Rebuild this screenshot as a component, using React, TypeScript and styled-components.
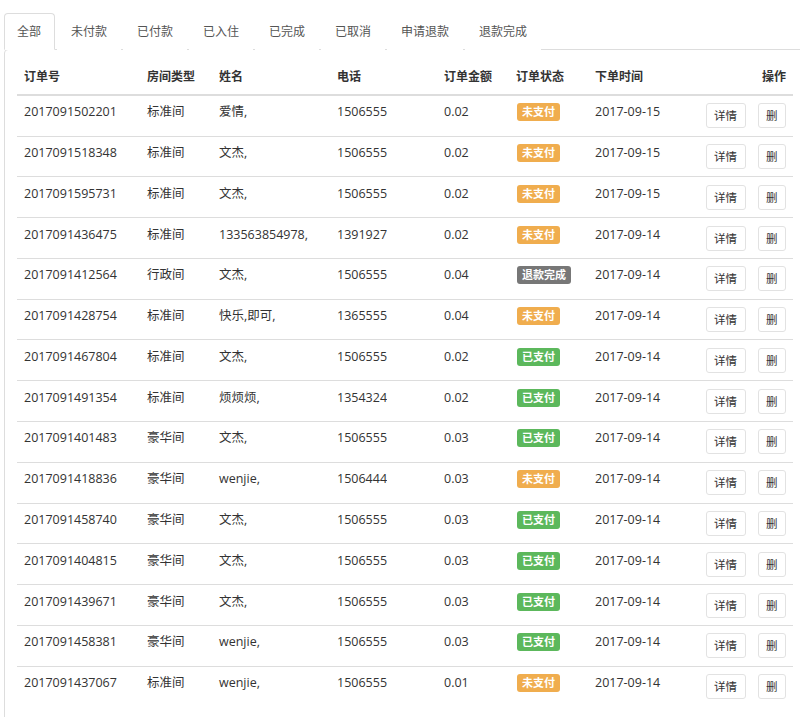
import React, { useState } from 'react';
import styled, { createGlobalStyle } from 'styled-components';

const GlobalStyle = createGlobalStyle`
  html, body {
    margin: 0;
    padding: 0;
    overflow: hidden;
    background: #fff;
  }
  body {
    font-family: "Open Sans", "Noto Sans CJK SC", sans-serif;
    font-size: 12.5px;
    color: #333;
  }
`;

type Status = 'unpaid' | 'paid' | 'refunded';

interface Order {
  no: string;
  room: string;
  name: string;
  phone: string;
  amount: string;
  status: Status;
  date: string;
}

const statusText: Record<Status, string> = {
  unpaid: '未支付',
  paid: '已支付',
  refunded: '退款完成',
};

const statusColor: Record<Status, string> = {
  unpaid: '#f0ad4e',
  paid: '#5cb85c',
  refunded: '#777777',
};

const tabs = ['全部', '未付款', '已付款', '已入住', '已完成', '已取消', '申请退款', '退款完成'];

const orders: Order[] = [
  { no: '2017091502201', room: '标准间', name: '爱情,', phone: '15065552171', amount: '0.02', status: 'unpaid', date: '2017-09-15' },
  { no: '2017091518348', room: '标准间', name: '文杰,', phone: '15065552171', amount: '0.02', status: 'unpaid', date: '2017-09-15' },
  { no: '2017091595731', room: '标准间', name: '文杰,', phone: '15065552171', amount: '0.02', status: 'unpaid', date: '2017-09-15' },
  { no: '2017091436475', room: '标准间', name: '133563854978,', phone: '13919276532', amount: '0.02', status: 'unpaid', date: '2017-09-14' },
  { no: '2017091412564', room: '行政间', name: '文杰,', phone: '15065552171', amount: '0.04', status: 'refunded', date: '2017-09-14' },
  { no: '2017091428754', room: '标准间', name: '快乐,即可,', phone: '13655558812', amount: '0.04', status: 'unpaid', date: '2017-09-14' },
  { no: '2017091467804', room: '标准间', name: '文杰,', phone: '15065552171', amount: '0.02', status: 'paid', date: '2017-09-14' },
  { no: '2017091491354', room: '标准间', name: '烦烦烦,', phone: '13543241190', amount: '0.02', status: 'paid', date: '2017-09-14' },
  { no: '2017091401483', room: '豪华间', name: '文杰,', phone: '15065552171', amount: '0.03', status: 'paid', date: '2017-09-14' },
  { no: '2017091418836', room: '豪华间', name: 'wenjie,', phone: '15064441203', amount: '0.03', status: 'unpaid', date: '2017-09-14' },
  { no: '2017091458740', room: '豪华间', name: '文杰,', phone: '15065552171', amount: '0.03', status: 'paid', date: '2017-09-14' },
  { no: '2017091404815', room: '豪华间', name: '文杰,', phone: '15065552171', amount: '0.03', status: 'paid', date: '2017-09-14' },
  { no: '2017091439671', room: '豪华间', name: '文杰,', phone: '15065552171', amount: '0.03', status: 'paid', date: '2017-09-14' },
  { no: '2017091458381', room: '豪华间', name: 'wenjie,', phone: '15065552171', amount: '0.03', status: 'paid', date: '2017-09-14' },
  { no: '2017091437067', room: '标准间', name: 'wenjie,', phone: '15065552171', amount: '0.01', status: 'unpaid', date: '2017-09-14' },
];

const Page = styled.div`
  padding: 13px 0 0 4px;
  width: 800px;
  box-sizing: border-box;
`;

const TabBar = styled.ul`
  display: flex;
  list-style: none;
  margin: 0;
  padding: 0;
  position: relative;
  z-index: 1;
`;

const Tab = styled.li<{ $active?: boolean }>`
  margin-right: 2px;
  margin-bottom: -1px;
  padding: 9px 13px 8px 13px;
  font-size: 12px;
  line-height: 18px;
  border: 1px solid ${(p) => (p.$active ? '#ddd' : 'transparent')};
  border-bottom-color: ${(p) => (p.$active ? '#fff' : 'transparent')};
  border-radius: 4px 4px 0 0;
  background: #fff;
  color: #555;
  cursor: pointer;
  white-space: nowrap;
  &:first-child {
    padding-left: 12px;
    padding-right: 13px;
  }
`;

const Panel = styled.div`
  border: 1px solid #ddd;
  border-radius: 4px 0 0 0;
  padding: 11px 12px 20px 12px;
  width: 802px;
  box-sizing: border-box;
  margin-right: -10px;
`;

const Table = styled.table`
  width: 776px;
  border-collapse: collapse;
  table-layout: fixed;
`;

const Th = styled.th<{ $right?: boolean }>`
  padding: 7.4px 7px;
  font-size: 12px;
  line-height: 18px;
  font-weight: bold;
  text-align: ${(p) => (p.$right ? 'right' : 'left')};
  vertical-align: bottom;
  border-bottom: 2px solid #ddd;
  white-space: nowrap;
`;

const Td = styled.td`
  padding: 7.4px 7px;
  line-height: 18px;
  vertical-align: top;
  border-top: 1px solid #ddd;
  white-space: nowrap;
  overflow: hidden;
`;

const Row = styled.tr`
  &:first-child ${Td} {
    border-top: none;
  }
`;

const Phone = styled.span`
  display: inline-block;
  width: 50px;
  overflow: hidden;
  vertical-align: top;
`;

const Badge = styled.span<{ $color: string }>`
  display: inline-block;
  height: 18px;
  line-height: 18px;
  padding: 0 5px;
  margin-left: 1px;
  border-radius: 3px;
  background: ${(p) => p.$color};
  color: #fff;
  font-size: 11px;
  font-weight: bold;
  vertical-align: top;
`;

const Actions = styled.div`
  display: flex;
  justify-content: flex-end;
  gap: 12px;
`;

const Button = styled.button`
  height: 25px;
  padding: 0 7.5px;
  border: 1px solid #e2e2e2;
  border-radius: 3px;
  background: #fff;
  color: #333;
  font-family: inherit;
  font-size: 11.5px;
  line-height: 23px;
  cursor: pointer;
`;

const widths = [123, 72, 118, 107, 72, 79, 111, 94];

const App: React.FC = () => {
  const [active, setActive] = useState(0);

  return (
    <Page>
      <GlobalStyle />
      <TabBar>
        {tabs.map((t, i) => (
          <Tab key={t} $active={i === active} onClick={() => setActive(i)}>
            {t}
          </Tab>
        ))}
      </TabBar>
      <Panel>
        <Table>
          <colgroup>
            {widths.map((w, i) => (
              <col key={i} style={{ width: w }} />
            ))}
          </colgroup>
          <thead>
            <tr>
              <Th>订单号</Th>
              <Th>房间类型</Th>
              <Th>姓名</Th>
              <Th>电话</Th>
              <Th>订单金额</Th>
              <Th>订单状态</Th>
              <Th>下单时间</Th>
              <Th $right>操作</Th>
            </tr>
          </thead>
          <tbody>
            {orders.map((o) => (
              <Row key={o.no}>
                <Td>{o.no}</Td>
                <Td>{o.room}</Td>
                <Td>{o.name}</Td>
                <Td>
                  <Phone>{o.phone}</Phone>
                </Td>
                <Td>{o.amount}</Td>
                <Td>
                  <Badge $color={statusColor[o.status]}>{statusText[o.status]}</Badge>
                </Td>
                <Td>{o.date}</Td>
                <Td>
                  <Actions>
                    <Button>详情</Button>
                    <Button>删</Button>
                  </Actions>
                </Td>
              </Row>
            ))}
          </tbody>
        </Table>
      </Panel>
    </Page>
  );
};

export default App;
